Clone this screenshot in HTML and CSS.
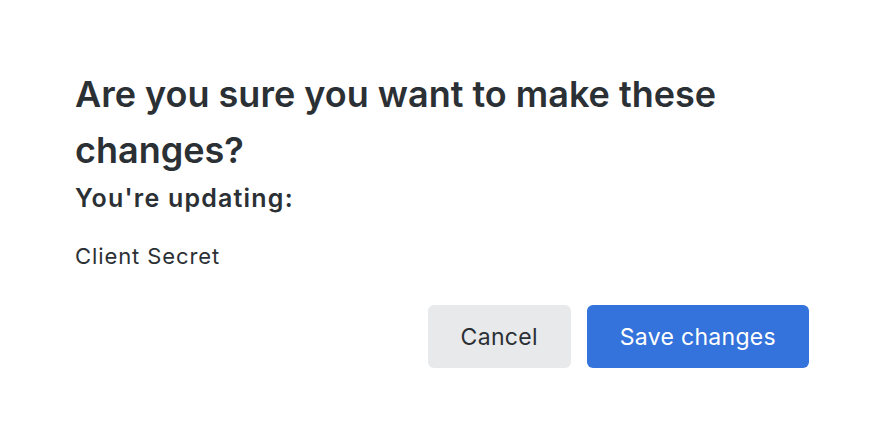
FILE: index.html
```html
<!DOCTYPE html>
<html>
<head>
<meta charset="utf-8">
<link rel="stylesheet" href="styles.css">
</head>
<body>
<div class="dialog">
  <h2 class="title">Are you sure you want to make these changes?</h2>
  <h3 class="subtitle">You're updating:</h3>
  <p class="item">Client Secret</p>
  <div class="actions">
    <button class="btn btn-secondary">Cancel</button>
    <button class="btn btn-primary">Save changes</button>
  </div>
</div>
</body>
</html>
```

FILE: styles.css
```css
html, body {
  margin: 0;
  padding: 0;
  background: #ffffff;
}
body {
  font-family: Inter, "Noto Sans", sans-serif;
  color: #2b3035;
}
.dialog {
  width: 734px;
  padding: 66px 0 0 75px;
}
.title {
  margin: 0;
  font-size: 36px;
  font-weight: 600;
  line-height: 56px;
}
.subtitle {
  margin: 4px 0 0;
  font-size: 25px;
  font-weight: 600;
  line-height: 32px;
  letter-spacing: 1.2px;
}
.item {
  margin: 27px 0 0;
  font-size: 22px;
  line-height: 30px;
  letter-spacing: 0.9px;
}
.actions {
  display: flex;
  justify-content: flex-end;
  gap: 16px;
  margin-top: 34px;
}
.btn {
  font-family: inherit;
  font-size: 23px;
  letter-spacing: 0.3px;
  height: 63px;
  border: none;
  border-radius: 6px;
  padding: 0 33px;
  cursor: pointer;
}
.btn-secondary {
  background: #e8e9eb;
  color: #2b3035;
}
.btn-primary {
  background: #3373db;
  color: #ffffff;
}
```
